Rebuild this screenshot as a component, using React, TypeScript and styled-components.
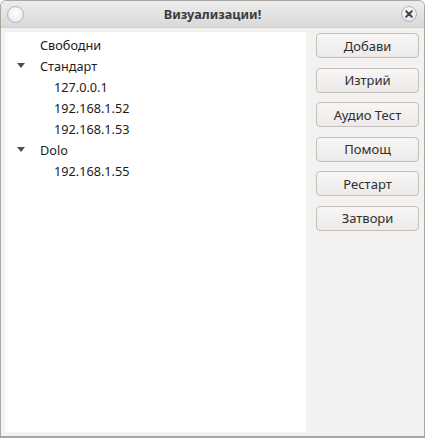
import React from "react"
import styled, { createGlobalStyle } from "styled-components"

interface TreeNode {
  label: string
  children?: string[]
}

const tree: TreeNode[] = [
  { label: "Свободни" },
  { label: "Стандарт", children: ["127.0.0.1", "192.168.1.52", "192.168.1.53"] },
  { label: "Dolo", children: ["192.168.1.55"] },
]

const actions = ["Добави", "Изтрий", "Аудио Тест", "Помощ", "Рестарт", "Затвори"]

const App = () => {
  return (
    <>
      <GlobalStyle />
      <Window>
        <TitleBar>
          <WindowDot />
          <Title>Визуализации!</Title>
          <CloseButton>
            <svg width="8" height="8" viewBox="0 0 8 8">
              <path d="M1.2 1.2 L6.8 6.8 M6.8 1.2 L1.2 6.8" stroke="#454545" strokeWidth="2" strokeLinecap="round" />
            </svg>
          </CloseButton>
        </TitleBar>
        <Body>
          <TreeView>
            {tree.map((node) => (
              <React.Fragment key={node.label}>
                <Row $depth={0}>
                  <Expander>{node.children && <Arrow />}</Expander>
                  {node.label}
                </Row>
                {node.children?.map((child) => (
                  <Row key={child} $depth={1}>
                    {child}
                  </Row>
                ))}
              </React.Fragment>
            ))}
          </TreeView>
          <ButtonColumn>
            {actions.map((label) => (
              <ActionButton key={label}>{label}</ActionButton>
            ))}
          </ButtonColumn>
        </Body>
      </Window>
    </>
  )
}

const GlobalStyle = createGlobalStyle`
  body {
    margin: 0;
    background: #ffffff;
    font-family: "Noto Sans", "Open Sans", sans-serif;
  }
`

const Window = styled.div`
  box-sizing: border-box;
  width: 425px;
  height: 438px;
  display: flex;
  flex-direction: column;
  background: #f3f2f0;
  border: 1px solid #aaa7a2;
  border-bottom-width: 2px;
  border-radius: 6px 6px 0 0;
  overflow: hidden;
`

const TitleBar = styled.div`
  height: 26px;
  flex: none;
  display: flex;
  align-items: center;
  padding: 0 7px 0 6px;
  background: linear-gradient(#ededed, #d9d9d9);
  border-bottom: 1px solid #cfcfcf;
`

const WindowDot = styled.div`
  width: 17px;
  height: 17px;
  border-radius: 50%;
  box-sizing: border-box;
  border: 1px solid #a9b2c2;
  background: radial-gradient(circle at 50% 35%, #ffffff, #e1e4ea);
`

const Title = styled.div`
  flex: 1;
  text-align: center;
  font-size: 12.7px;
  font-weight: bold;
  color: #3b3b3b;
`

const CloseButton = styled.div`
  width: 16px;
  height: 16px;
  border-radius: 50%;
  box-sizing: border-box;
  border: 1px solid #aab3c3;
  background: radial-gradient(circle at 50% 35%, #ffffff, #dde1e8);
  display: flex;
  align-items: center;
  justify-content: center;
`

const Body = styled.div`
  flex: 1;
  display: flex;
  padding: 4px;
  gap: 10px;
`

const TreeView = styled.div`
  width: 301px;
  background: #ffffff;
  padding-top: 2px;
`

const Row = styled.div<{ $depth: number }>`
  height: 21px;
  display: flex;
  align-items: center;
  padding-left: ${(p) => (p.$depth === 0 ? 0 : 49)}px;
  font-size: 12.7px;
  color: #1c1c1c;
`

const Expander = styled.div`
  width: 35px;
  height: 21px;
  display: flex;
  align-items: center;
  padding-left: 12px;
  box-sizing: border-box;
`

const Arrow = styled.div`
  width: 0;
  height: 0;
  border-left: 4.5px solid transparent;
  border-right: 4.5px solid transparent;
  border-top: 5px solid #4f4f4f;
`

const ButtonColumn = styled.div`
  width: 103px;
  padding-top: 1px;
  display: flex;
  flex-direction: column;
  gap: 9.6px;
`

const ActionButton = styled.button`
  height: 25px;
  padding: 0;
  border: 1px solid #c3c0bb;
  border-radius: 4px;
  background: linear-gradient(#f7f6f5, #ecebe9);
  font-family: "Noto Sans", "Open Sans", sans-serif;
  font-size: 13px;
  color: #2e2e2e;
`

export default App
